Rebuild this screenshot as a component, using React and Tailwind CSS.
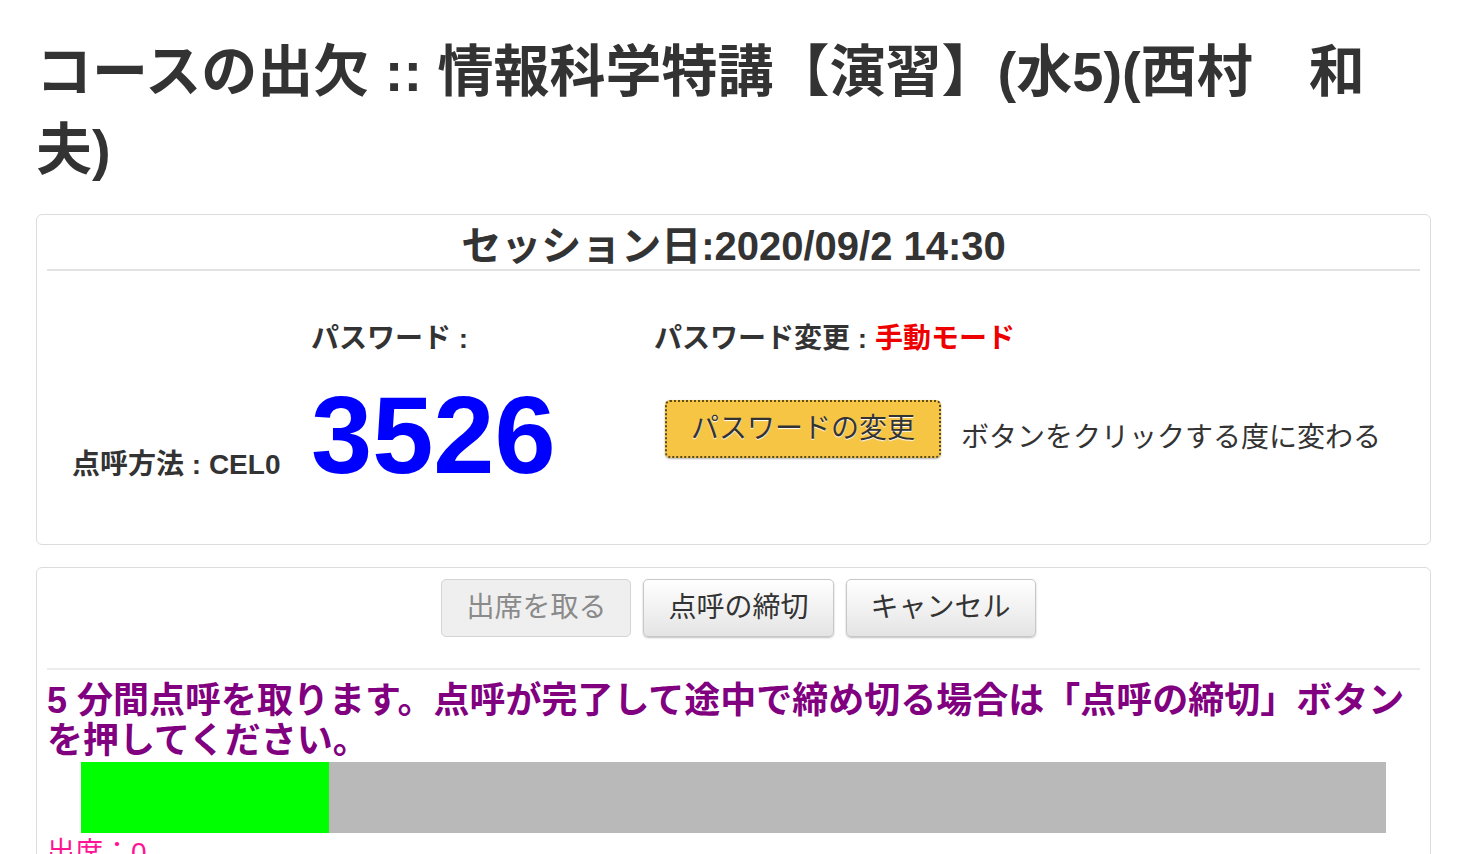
const font = "font-['Liberation_Sans','Noto_Sans_CJK_JP',sans-serif]";

function GrayButton({ children, disabled }) {
  return (
    <button
      disabled={disabled}
      className={
        disabled
          ? "h-[58px] px-[24px] rounded-[5px] border border-[#d4d4d4] bg-[#efefef] text-[28px] text-[#8a8a8a] leading-none"
          : "h-[58px] px-[24px] rounded-[5px] border border-[#c8c8c8] bg-gradient-to-b from-white to-[#e4e4e4] text-[28px] text-[#333] leading-none shadow-[0_1px_2px_rgba(0,0,0,0.25)]"
      }
    >
      {children}
    </button>
  );
}

export default function App() {
  const progress = 19;

  return (
    <div className={`${font} bg-white text-[#333] min-h-screen pl-[36px] pr-[38px] pt-[33px] overflow-hidden h-[854px]`}>
      <h1 className="text-[56px] font-bold leading-[78px] text-[#333]">
        コースの出欠 :: 情報科学特講【演習】(水5)(西村　和夫)
      </h1>

      <div className="mt-[25px] border border-[#dcdcdc] rounded-[6px] px-[10px]">
        <div className="h-[56px] pt-[6px] text-center text-[40px] font-bold leading-[50px] border-b-2 border-[#e2e2e2]">
          セッション日:2020/09/2 14:30
        </div>

        <div className="flex pt-[48px] pb-[54px]">
          <div className="w-[264px] pl-[25px] self-end mb-[5px] text-[28px] font-bold leading-[40px]">
            点呼方法 : CEL0
          </div>
          <div className="w-[343px] flex flex-col">
            <div className="text-[28px] font-bold leading-[40px]">パスワード :</div>
            <div className="mt-[21px] text-[110px] font-bold leading-none text-[#0000ff]">3526</div>
          </div>
          <div className="flex flex-col">
            <div className="text-[28px] font-bold leading-[40px]">
              パスワード変更 : <span className="text-[#ee0000]">手動モード</span>
            </div>
            <div className="mt-[41px] ml-[11px] flex items-start gap-[20px]">
              <button className="h-[58px] px-[24px] rounded-[5px] border-2 border-dotted border-[#5b4a1c] bg-[#f6c543] text-[28px] leading-none text-[#333] [text-shadow:0_1px_1px_#fff] shadow-[0_1px_2px_rgba(0,0,0,0.3)]">
                パスワードの変更
              </button>
              <span className="text-[28px] leading-[40px] text-[#333] mt-[18px]">ボタンをクリックする度に変わる</span>
            </div>
          </div>
        </div>
      </div>

      <div className="mt-[22px] border border-[#dcdcdc] rounded-[6px] px-[10px] pt-[11px] h-[400px]">
        <div className="flex justify-center gap-[12px] pl-[10px]">
          <GrayButton disabled>出席を取る</GrayButton>
          <GrayButton>点呼の締切</GrayButton>
          <GrayButton>キャンセル</GrayButton>
        </div>
        <div className="mt-[31px] border-t-2 border-[#ececec]" />
        <p className="mt-[11px] text-[36px] font-bold leading-[40px] text-[#800080]">
          5 分間点呼を取ります。点呼が完了して途中で締め切る場合は「点呼の締切」ボタンを押してください。
        </p>
        <div className="mt-[1px] mx-auto w-[95%] h-[71px] bg-[#b9b9b9] flex">
          <div className="h-full bg-[#00ff00]" style={{ width: `${progress}%` }} />
        </div>
        <div className="mt-[2px] text-[28px] leading-[36px] text-[#ff1493]">出席：0</div>
      </div>
    </div>
  );
}
